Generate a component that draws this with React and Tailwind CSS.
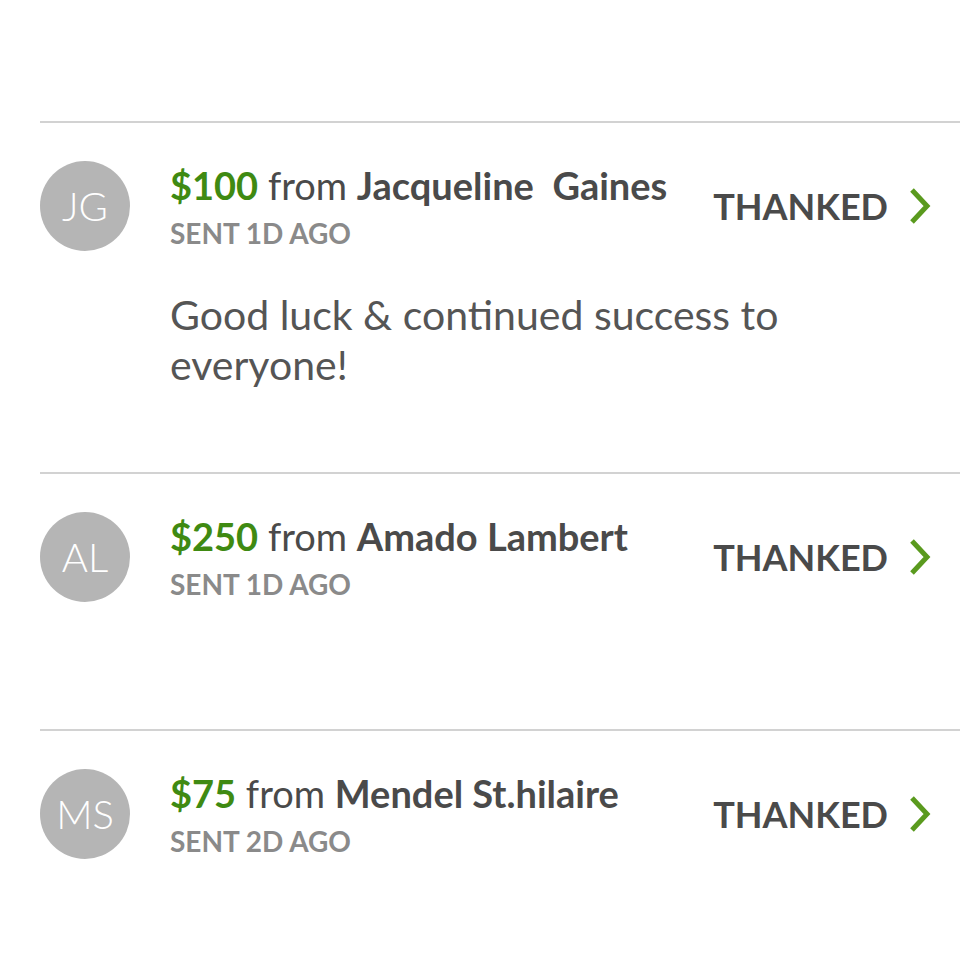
import React from 'react';

const gifts = [
  { initials: 'JG', amount: '$100', name: 'Jacqueline\u00a0 Gaines', sent: 'SENT 1D AGO', message: 'Good luck & continued success to everyone!' },
  { initials: 'AL', amount: '$250', name: 'Amado Lambert', sent: 'SENT 1D AGO' },
  { initials: 'MS', amount: '$75', name: 'Mendel St.hilaire', sent: 'SENT 2D AGO' },
];

const Chevron = () => (
  <svg width="24" height="38" viewBox="0 0 24 38" fill="none">
    <polyline points="4,3 19,19 4,35" stroke="#5a9a1e" strokeWidth="5" strokeLinecap="butt" strokeLinejoin="miter" />
  </svg>
);

const GiftRow = ({ gift }) => (
  <div className={`ml-[40px] border-t-2 border-[#d2d2d2] pt-[38px] ${gift.message ? 'pb-[82px]' : 'pb-[127px]'}`}>
    <div className="flex items-center">
      <div className="w-[90px] h-[90px] rounded-full bg-[#b5b5b5] flex items-center justify-center text-white text-[40px] font-light shrink-0">
        {gift.initials}
      </div>
      <div className="ml-[40px] flex-1 flex flex-col">
        <div className="text-[38px] leading-[42px] text-[#4a4a4a] whitespace-nowrap">
          <span className="font-bold text-[#3f8a12]">{gift.amount}</span>
          <span> from </span>
          <span className="font-bold">{gift.name}</span>
        </div>
        <div className="text-[28px] leading-[32px] font-bold text-[#8a8a8a] mt-[11px]">{gift.sent}</div>
      </div>
      <div className="flex items-center mr-[28px] shrink-0">
        <span className="text-[36px] font-bold text-[#4a4a4a]">THANKED</span>
        <span className="ml-[20px] flex"><Chevron /></span>
      </div>
    </div>
    {gift.message && (
      <p className="ml-[130px] mt-[39px] text-[41px] leading-[50px] text-[#555] max-w-[680px]">
        {gift.message}
      </p>
    )}
  </div>
);

export default function App() {
  return (
    <div className="w-[960px] h-[960px] bg-white overflow-hidden pt-[121px]" style={{ fontFamily: 'Lato, "Open Sans", sans-serif' }}>
      {gifts.map((g) => (
        <GiftRow key={g.initials} gift={g} />
      ))}
    </div>
  );
}
